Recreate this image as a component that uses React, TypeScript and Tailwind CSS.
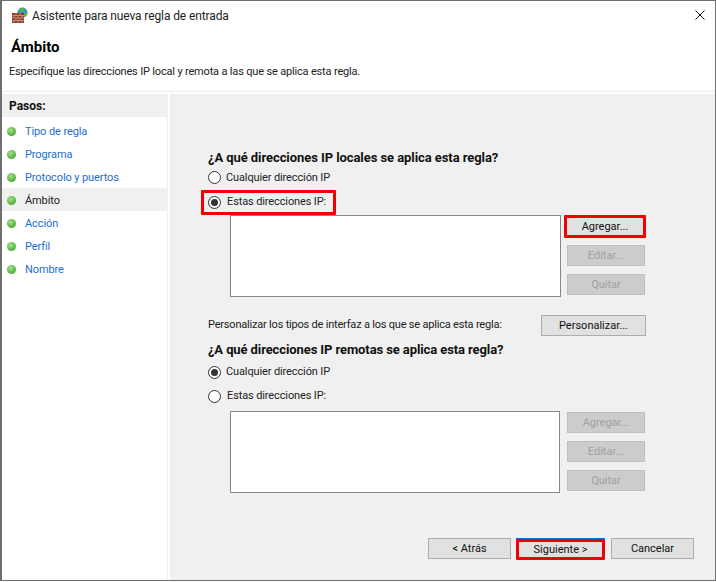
import React from "react";

const font = "font-['Roboto','Liberation_Sans',sans-serif]";

function Btn({ label, disabled, className = "" }: { label: string; disabled?: boolean; className?: string }) {
  return (
    <div
      className={`flex items-center justify-center border pt-[1px] text-[11px] whitespace-nowrap ${
        disabled ? "border-[#bfbfbf] bg-[#cccccc] text-[#a0a0a0]" : "border-[#adadad] bg-[#e1e1e1] text-[#111]"
      } ${className}`}
    >
      {label}
    </div>
  );
}

function Radio({ checked, label, className = "", labelClass = "" }: { checked?: boolean; label: string; className?: string; labelClass?: string }) {
  return (
    <div className={`flex items-center whitespace-nowrap text-[11px] tracking-[-0.12px] text-[#222] ${className}`}>
      <span className="flex h-[13px] w-[13px] items-center justify-center rounded-full border border-[#333] bg-white">
        {checked && <span className="h-[7px] w-[7px] rounded-full bg-[#333]" />}
      </span>
      <span className={`ml-[5px] ${labelClass}`}>{label}</span>
    </div>
  );
}

function Dot() {
  return (
    <span className="mt-[1px] h-[9px] w-[9px] rounded-full bg-[radial-gradient(circle_at_40%_35%,#a8e08c,#4fae3a_70%)]" />
  );
}

function Step({ label, active }: { label: string; active?: boolean }) {
  return (
    <div className={`flex h-[23px] items-center pl-[5px] text-[11px] tracking-[-0.1px] ${active ? "bg-[#f0f0f0] text-[#222]" : "text-[#1c6dd0]"}`}>
      <Dot />
      <span className="ml-[9px] mt-[3px]">{label}</span>
    </div>
  );
}

function Logo() {
  return (
    <svg width="16" height="16" viewBox="0 0 16 16" className="mr-[4px] -mt-[3px]">
      <circle cx="10.500" cy="5.500" r="5" fill="#2f8fd8" />
      <path d="M8 1.500c2-1 4-.5 5 .5l-1 2-3 1-2-1zM12 6l3-1 .5 2-2 3-1.500-1z" fill="#5bb04a" />
      <rect x="0" y="6" width="12" height="10" fill="#8a3b2c" />
      <path d="M0 8.500h12M0 11h12M0 13.500h12M4 6v2.500M8 6v2.500M2 8.500V11M6 8.500V11M10 8.500V11M4 11v2.500M8 11v2.500M2 13.500V16M6 13.500V16M10 13.500V16" stroke="#c98a70" strokeWidth="1" fill="none" />
    </svg>
  );
}

export default function App() {
  return (
    <div className={`flex h-[581px] w-[716px] flex-col border-t border-r border-b border-l-2 border-[#6f6f6f] bg-white ${font}`}>
      <div className="h-[91px] shrink-0 border-b border-[#ececec]">
        <div className="flex h-[30px] items-center pl-[10px] pr-[10px] text-[12px] tracking-[-0.11px] text-[#222]">
          <Logo />
          <span>Asistente para nueva regla de entrada</span>
          <svg width="10" height="10" viewBox="0 0 10 10" className="ml-auto -mt-[2px]">
            <path d="M.5.5l9 9M9.500.5l-9 9" stroke="#111" strokeWidth="1" />
          </svg>
        </div>
        <div className="pl-[9px] pt-[6px] text-[15px] font-bold leading-[20px] text-black">Ámbito</div>
        <div className="pl-[7px] pt-[7px] text-[11px] leading-[16px] tracking-[-0.17px] text-[#222]">
          Especifique las direcciones IP local y remota a las que se aplica esta regla.
        </div>
      </div>
      <div className="flex flex-1 pt-[2px]">
        <div className="w-[166px] shrink-0 border-r border-[#f0f0f0]">
          <div className="mb-[2px] flex h-[23px] items-center bg-[#f0f0f0] pl-[7px] text-[12px] font-bold text-[#111]">Pasos:</div>
          <Step label="Tipo de regla" />
          <Step label="Programa" />
          <Step label="Protocolo y puertos" />
          <Step label="Ámbito" active />
          <Step label="Acción" />
          <Step label="Perfil" />
          <Step label="Nombre" />
        </div>
        <div className="ml-[2px] flex flex-1 flex-col bg-[#f0f0f0] pl-[38px] pt-[56px]">
          <div className="whitespace-nowrap text-[13px] font-bold leading-[16px] tracking-[-0.07px] text-[#111]">¿A qué direcciones IP locales se aplica esta regla?</div>
          <Radio label="Cualquier dirección IP" className="mt-[1px] h-[20px]" labelClass="mt-[2px]" />
          <div className="-ml-[7px] mt-[3px] flex h-[25px] w-[135px] items-center rounded-[1px] border-[3px] border-[#f00000] pl-[4px]">
            <Radio checked label="Estas direcciones IP:" labelClass="ml-[6px]" />
          </div>
          <div className="flex pl-[22px]">
            <div className="h-[82px] w-[331px] border border-[#828790] bg-white" />
            <div className="ml-[3px] flex flex-col">
              <div className="h-[23px] w-[82px] rounded-[1px] border-[3px] border-[#f00000]">
                <Btn label="Agregar..." className="h-full w-full !border-0" />
              </div>
              <Btn label="Editar..." disabled className="ml-[3px] mt-[7px] h-[21px] w-[78px]" />
              <Btn label="Quitar" disabled className="ml-[3px] mt-[8px] h-[21px] w-[78px]" />
            </div>
          </div>
          <div className="mt-[18px] flex h-[21px] w-[438px] items-center justify-between whitespace-nowrap text-[11px] tracking-[-0.2px] text-[#222]">
            <span>Personalizar los tipos de interfaz a los que se aplica esta regla:</span>
            <Btn label="Personalizar..." className="h-[21px] w-[105px] tracking-normal" />
          </div>
          <div className="mt-[6px] whitespace-nowrap text-[13px] font-bold leading-[16px] tracking-[-0.1px] text-[#111]">¿A qué direcciones IP remotas se aplica esta regla?</div>
          <Radio checked label="Cualquier dirección IP" className="mt-[4px] h-[20px]" />
          <Radio label="Estas direcciones IP:" className="mt-[4px] h-[20px]" labelClass="ml-[6px]" />
          <div className="mt-[5px] flex pl-[22px]">
            <div className="h-[82px] w-[330px] border border-[#828790] bg-white" />
            <div className="ml-[7px] mt-[1px] flex flex-col">
              <Btn label="Agregar..." disabled className="h-[21px] w-[78px]" />
              <Btn label="Editar..." disabled className="mt-[8px] h-[21px] w-[78px]" />
              <Btn label="Quitar" disabled className="mt-[8px] h-[21px] w-[78px]" />
            </div>
          </div>
          <div className="mb-[20px] mt-auto flex w-[486px] items-start justify-end">
            <Btn label="< Atrás" className="h-[21px] w-[83px]" />
            <div className="ml-[5px] w-[89px] border-t border-[#0078d7]">
              <div className="h-[21px] rounded-[1px] border-[3px] border-[#f00000]">
                <Btn label="Siguiente >" className="h-full w-full !border-0" />
              </div>
            </div>
            <Btn label="Cancelar" className="ml-[6px] h-[21px] w-[83px]" />
          </div>
        </div>
      </div>
    </div>
  );
}
